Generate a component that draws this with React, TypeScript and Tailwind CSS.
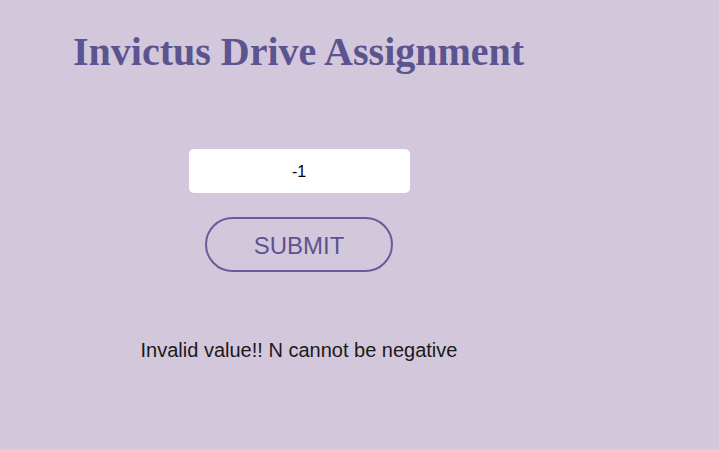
import React from "react";

export default function App() {
  return (
    <div className="min-h-[449px] w-full bg-[#d3c7db] font-['Liberation_Sans',Arial,sans-serif]">
      <div className="flex w-[598px] flex-col items-center">
        <h1 className="mt-[29px] self-start pl-[73px] font-['Liberation_Serif','Times_New_Roman',serif] text-[40px] font-bold leading-[46px] text-[#5c5391]">
          Invictus Drive Assignment
        </h1>
        <input
          type="text"
          defaultValue="-1"
          className="mt-[74px] h-[44px] w-[221px] rounded-[5px] bg-white pt-[2px] text-center text-[16px] text-black outline-none"
        />
        <button className="mt-[24px] h-[55px] w-[188px] rounded-full border-2 border-[#6a5b9a] pt-[3px] text-[24px] text-[#5c5391]">
          SUBMIT
        </button>
        <p className="mt-[66px] text-[20px] leading-[24px] text-[#1a1a1a]">
          Invalid value!! N cannot be negative
        </p>
      </div>
    </div>
  );
}
